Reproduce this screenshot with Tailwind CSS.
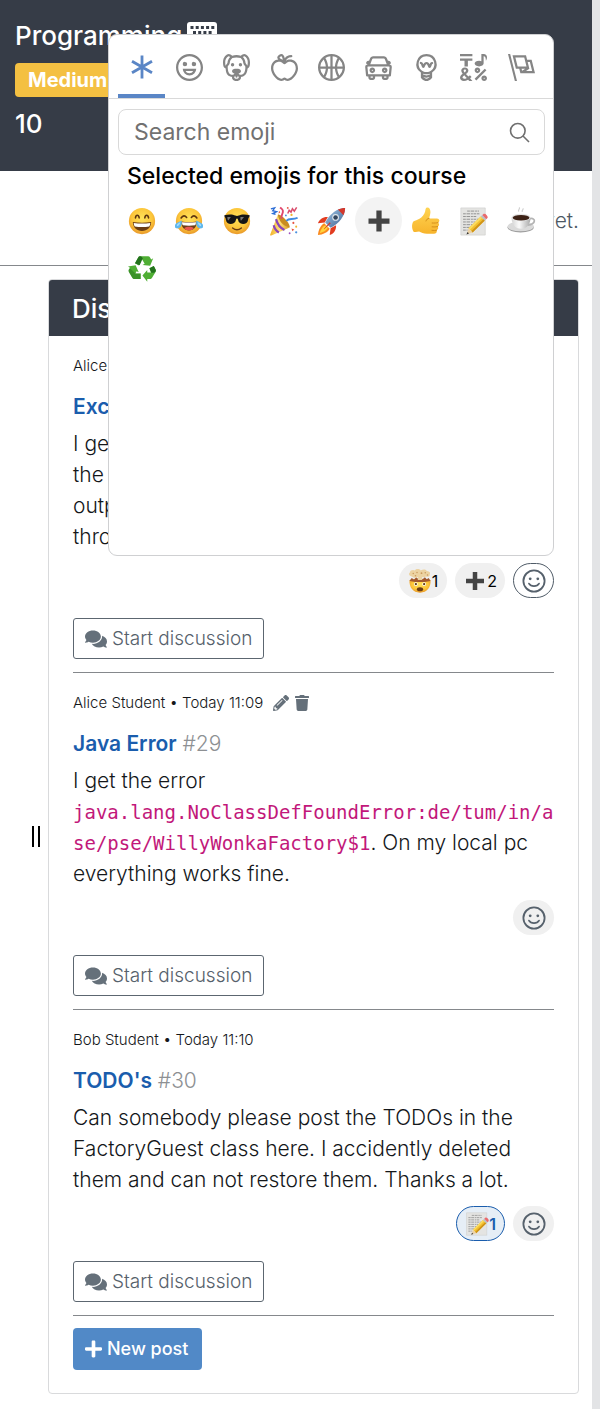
<!DOCTYPE html>
<html lang="en">
<head>
<meta charset="utf-8">
<meta name="viewport" content="width=device-width, initial-scale=1">
<title>Programming exercise discussion</title>
<script src="https://cdn.jsdelivr.net/npm/@tailwindcss/browser@4"></script>
</head>
<body class="bg-[#e3e4e6] font-['Inter',sans-serif] text-[#14171a]">

<svg class="absolute size-0" aria-hidden="true">
  <defs>
    <radialGradient id="face" cx=".5" cy=".4" r=".6"><stop offset="0" stop-color="#ffe25a"/><stop offset=".65" stop-color="#fcc63a"/><stop offset="1" stop-color="#e9992a"/></radialGradient>
    <linearGradient id="thumbFill" x1="0" y1="0" x2="0" y2="1"><stop offset="0" stop-color="#ffd452"/><stop offset="1" stop-color="#f7b42c"/></linearGradient>
    <linearGradient id="cone" x1="0" y1="0" x2="1" y2="0"><stop offset="0" stop-color="#f2b32c"/><stop offset=".5" stop-color="#ffe07a"/><stop offset="1" stop-color="#d99a20"/></linearGradient>
    <linearGradient id="hull" x1="0" y1="0" x2="1" y2="1"><stop offset="0" stop-color="#a9c9e6"/><stop offset=".5" stop-color="#6f95bd"/><stop offset="1" stop-color="#3c5f8c"/></linearGradient>
    <linearGradient id="cup" x1="0" y1="0" x2="1" y2="0"><stop offset="0" stop-color="#d4d4d4"/><stop offset=".4" stop-color="#fafafa"/><stop offset="1" stop-color="#a9a9a9"/></linearGradient>
  </defs>
  <symbol id="comments" viewBox="0 0 576 512"><path fill="currentColor" d="M416 192c0-88.4-93.1-160-208-160S0 103.6 0 192c0 34.3 14.1 65.9 38 92-13.4 30.2-35.5 54.2-35.8 54.5-2.2 2.3-2.8 5.7-1.5 8.7S4.8 352 8 352c36.6 0 66.9-12.3 88.7-25 32.2 15.7 70.3 25 111.3 25 114.9 0 208-71.6 208-160zm122 220c23.9-26 38-57.7 38-92 0-66.9-53.5-124.2-129.3-148.1.9 6.6 1.3 13.3 1.3 20.1 0 105.9-107.7 192-240 192-10.8 0-21.3-.8-31.7-1.9C207.8 439.6 281.8 480 368 480c41 0 79.1-9.2 111.3-25 21.8 12.7 52.1 25 88.7 25 3.2 0 6.1-1.9 7.3-4.8 1.3-2.9.7-6.3-1.5-8.7-.3-.3-22.4-24.2-35.8-54.5z"/></symbol>
  <symbol id="react" viewBox="0 0 24 24"><circle cx="12" cy="12" r="10.6" fill="none" stroke="currentColor" stroke-width="1.8"/><circle cx="8.2" cy="9.8" r="1.4" fill="currentColor"/><circle cx="15.8" cy="9.8" r="1.4" fill="currentColor"/><path d="M7 14.6c2 3.4 8 3.4 10 0" fill="none" stroke="currentColor" stroke-width="1.8" stroke-linecap="round"/></symbol>
  <symbol id="heavy-plus" viewBox="0 0 32 32"><path fill="#444" d="M13 4h6v9h9v6h-9v9h-6v-9H4v-6h9z"/></symbol>
  <symbol id="memo" viewBox="0 0 32 32">
    <path fill="#e4e4e2" stroke="#c9c9c7" stroke-width=".6" d="M2 1h27v30H2z"/>
    <g stroke="#8b8b8b" stroke-width="1" stroke-dasharray="3 .8 4 1 2 .7"><path d="M9 4.500h13M4.500 7.500h18M4.500 10.500h15M4.500 13.500h17M4.500 16.500h13M4.500 19.500h11M4.500 22.500h8M4.500 25.500h5"/></g>
    <path fill="#f3c02f" d="M10.500 23.500 24 10.500l4.500 4.500L15 28.200z"/><path fill="#fbdc62" d="m10.500 23.500 13.500-13 1.500 1.500-13.500 13z"/><path fill="#cf9319" d="m13.500 26.700 13.400-13.200 1.600 1.500L15 28.200z"/>
    <path fill="#ecd1a4" d="m10.500 23.500 4.500 4.700-6.300 1.900z"/><path fill="#333" d="m9.400 27.500 1.600 1.800-2.800 1z"/>
    <path fill="#b9c0c6" d="m24 10.500 1.700-1.600 4.400 4.600-1.600 1.500z"/><path fill="#ea6a6c" d="m25.700 8.900 1.300-1.200c1.700-1.500 5.800 2.700 4.400 4.500l-1.300 1.300z"/>
  </symbol>
  <symbol id="grin" viewBox="0 0 32 32"><circle cx="16" cy="16" r="15" fill="url(#face)"/><path d="M8.500 12.500c.6-4 3.600-4 4.300 0M19.200 12.500c.6-4 3.600-4 4.300 0" fill="none" stroke="#5d3510" stroke-width="1.800" stroke-linecap="round"/><path fill="#6b3d14" d="M5.500 17.200c7 .9 14 .9 21 0 0 6-4.500 10.300-10.500 10.300S5.500 23.200 5.500 17.200z"/><path fill="#fff" d="M6.500 18.200c6.500.8 12.500.8 19 0-.1 1.700-.5 2.900-1.200 4-5.500.8-11 .8-16.600 0-.7-1.100-1.100-2.300-1.200-4z"/></symbol>
  <symbol id="joy" viewBox="0 0 32 32"><circle cx="16" cy="16" r="15" fill="url(#face)"/><path d="M7 12.600c2-3.300 4.500-3 6.300-.6M18.700 12c1.800-2.400 4.300-2.700 6.300.6" fill="none" stroke="#5d3510" stroke-width="1.800" stroke-linecap="round"/><path fill="#6b3d14" d="M7 16.500c6 .8 12 .8 18 0 0 6-3.500 10.300-9 10.300s-9-4.300-9-10.300z"/><path fill="#fff" d="M8 17.300c5.300.7 10.700.7 16 0-.1 1.600-.4 2.500-.9 3.500-4.700.7-9.500.7-14.200 0-.5-1-.8-1.900-.9-3.500z"/><path fill="#e8584e" d="M10.500 24.200c2.700-2.200 8.300-2.200 11 0-2.600 3.300-8.400 3.300-11 0z"/><path fill="#5fb8ee" d="M7.500 15.500C8.500 20.500 6.500 24.500 2.500 24.500c-3.700 0-3.800-4.500-.3-6.200zM24.500 15.500c-1 5 1 9 5 9 3.700 0 3.800-4.500.3-6.200z"/><path fill="#a6ddfb" d="M6 17.500c-.5 2.500-1.700 4-3.700 4.500-.6-1.500.2-2.700 3.700-4.500zM26 17.500c.5 2.500 1.700 4 3.700 4.500.6-1.500-.2-2.700-3.700-4.500z"/></symbol>
  <symbol id="cool" viewBox="0 0 32 32"><circle cx="16" cy="16" r="15" fill="url(#face)"/><path fill="#151515" d="M1.500 9.500c5-1.500 10-1.200 12.500.3 1.300.6 2.700.6 4 0 2.500-1.500 7.500-1.800 12.500-.3l-.5 2.300c-.8.300-1 1-1.300 2.700-.6 3.500-2.600 4.800-5.700 4.800-4 0-5.300-2.400-5.900-5-.3-1.500-1.900-1.500-2.200 0-.6 2.600-1.900 5-5.900 5-3.100 0-5.100-1.300-5.700-4.800-.3-1.700-.5-2.400-1.300-2.700z"/><path fill="#777" d="M5 11.300h4l-3 4.200c-.8-1-1-2.800-1-4.200zM20 11.300h4l-3.500 4.500c-.6-1.200-.7-3-.5-4.500z"/><path d="M11 24c3 2.300 7 2.300 10 0" fill="none" stroke="#6b3d14" stroke-width="1.700" stroke-linecap="round"/></symbol>
  <symbol id="party" viewBox="0 0 32 32"><path fill="url(#cone)" d="M9.500 9c1.500 6 6.500 12 12.500 14L2.500 31.500c-1 .3-1.500-.2-1.200-1.200z"/><path d="M7.500 14c1.300 5 4.500 9.500 9 11.500M5 20.500c.8 3.500 2.500 6 5.500 7.700" fill="none" stroke="#8a45b8" stroke-width="2.300"/><path fill="#c98c20" d="M9.500 9c3-.8 13.500 9 12.500 14-6-.8-12.500-8-12.500-14z"/><path d="M13.500 13.500c-1-4 1.800-5 1.300-8.500-.3-1.800-1.800-2.500-3-3.500" fill="none" stroke="#e0476d" stroke-width="2"/><path d="M18.500 15.800c3-3.500 7-.5 12-3.300" fill="none" stroke="#3f8be0" stroke-width="2"/><path d="M2 3l4-1-2 3 4 1-4 2 3 1" fill="none" stroke="#2f6fd6" stroke-width="1.500"/><path d="m20 8 1.500-3.500 2 2L25 3l2 2.500 2.500-4" fill="none" stroke="#d94c6c" stroke-width="1.600"/><g fill="#e5533f"><circle cx="20" cy="2" r="1"/><circle cx="26" cy="18" r="1.100"/><path d="m24 24 3 1-2 2zM11 5l1 2-2 1z"/></g><g fill="#f1b52e"><circle cx="24" cy="9.500" r="1.200"/><circle cx="29" cy="22" r="1.100"/></g><g fill="#4c90df"><circle cx="29" cy="28" r="1.200"/><circle cx="18" cy="10" r="1"/></g><circle cx="22" cy="29" r="1" fill="#9c50be"/></symbol>
  <symbol id="rocket" viewBox="0 0 32 32"><path fill="#e23c20" d="M12 11C7 10.500 2.500 13.500 1 18l7.500-1zM21 20c.5 5-2.500 9.500-7 11l1-7.500z"/><path fill="#fa8a1f" d="M8 18c-4 2-6.500 7.500-7 13 5.500-.5 11-3 13-7z"/><path fill="#ffd43c" d="M9 20c-3 1.500-5 5-6 9 4-1 7.500-3 9-6z"/><path fill="url(#hull)" d="M31 1C22.500 1 14 7.500 9 17l6 6c9.500-5 16-13.500 16-22z"/><path fill="#d3382c" d="M31 1c-2.800 0-5.400.6-8 1.800L29.200 9C30.400 6.400 31 3.800 31 1zM14 16.700l1.300 1.300-7.500 6.500-.3-.3z"/><circle cx="20.500" cy="11.500" r="3.700" fill="#dfe6ec"/><circle cx="20.500" cy="11.500" r="2.500" fill="#33465e"/></symbol>
  <symbol id="thumb" viewBox="0 0 32 32"><path fill="url(#thumbFill)" d="M1.500 16.500C4 15.500 6 15 8.500 13.500c3-2 5.500-4.700 6.500-8.500.4-2 .5-4.500 2.500-4.500 2.800 0 3.800 3 3.500 6-.2 2.500-1 4.500-1.500 6.500h9c3.300 0 3.600 4 1.200 4.800 1.800 1.200 1.500 4-.4 4.600 1.300 1.300.7 3.700-1.200 4.200.8 2-.4 3.900-3 3.900h-8c-4 0-6.500-1.200-9-2.500-2 .7-4 .5-6 .5C-.5 25.500-.5 19.500 1.500 16.500z"/><path d="M29.700 17.800c-2 .6-4 .6-6.700.5M29.300 22.400c-2 .5-4 .5-6.300.3M28.100 26.600c-1.700.4-3.300.4-5.300.1M19.500 13c-2 .2-3 1.300-3.500 3" fill="none" stroke="#d38c17" stroke-width="1.100" stroke-linecap="round"/></symbol>
  <symbol id="coffee" viewBox="0 0 32 32"><ellipse cx="15" cy="22.500" rx="14.500" ry="5.500" fill="#9d9d9d"/><ellipse cx="15" cy="21.500" rx="14.500" ry="5.300" fill="#dadada"/><path d="M25 13c7-2 7.500 6-2 7" fill="none" stroke="#b4b4b4" stroke-width="1.900"/><path fill="url(#cup)" d="M5 11.500h21c0 7-4 12.500-10.500 12.500S5 18.500 5 11.500z"/><ellipse cx="15.500" cy="11.500" rx="10.500" ry="4" fill="#e6e6e6"/><ellipse cx="15.500" cy="11.800" rx="9.300" ry="3.100" fill="#3d2216"/><path d="M13 5c-1.500-2 2-2.500.5-4.500M17 5.500c-1.500-2 2-2.500.5-4" fill="none" stroke="#cfcfcf" stroke-width="1.300"/></symbol>
  <symbol id="recycle" viewBox="0 0 32 32"><g fill="#4fae34"><path d="M8 9.500 11.500 3c.6-1 1.400-1.500 2.500-1.500h9c1 0 1.700.4 2.200 1.300l1.300 2.200 2.300-1.200-3.500 8.500-8.700-1 2.400-1.400-3.300-5.700-3.500 7.800z"/><path d="m24.500 15 5-2.500 2 4c.6 1 .5 2 0 3L27.500 26c-.6 1-1.300 1.400-2.500 1.400h-3V30.500l-5.500-7 5.500-6.500v3h4.200z"/><path d="M14.500 21v6.500H7.300c-1.100 0-1.900-.4-2.400-1.400L1 19.300c-.5-1-.5-1.800 0-2.800l1.200-2L0 13l8.700-1.200 3.600 8-2.500-1.300L8.500 21z"/></g><g fill="#23721d"><path d="m8 9.500 3.500-6.500c1-1.800 3.500-2 4.700-.2l.6 1.100-3.500 7.700z"/><path d="m24.500 15 5-2.500 2 4c1 2-.5 3.700-2.300 3.700h-2.500z"/><path d="M1 19.300C0 17 1.500 16 2.500 15.500l6 5.500H14.500v6.500H7.300c-1 0-1.900-.4-2.400-1.400z" opacity=".45"/></g></symbol>
  <symbol id="mindblown" viewBox="0 0 32 32"><path fill="url(#face)" d="M2 15c4-2 24-2 28 0 .6 9-4.500 16.500-14 16.500S1.400 24 2 15z"/><path fill="#a2592d" d="M2 15.500 5 12l3 2 3-3 3 2.500L16.500 10l3 3.500 3-2.500 2.500 2.500 2.500-1.500 2.500 3.500c-4 2.500-24 2.500-28 0z"/><path fill="#ecd3a2" d="M5 10C1.500 9.500 0 6.500 2.500 4.500 3 1.500 7 .5 9 2c2-2.500 6-2.500 8 0 2.500-2 6.500-2 8 .5 3 0 5.500 2 4 4.500.5 2.500-2 4-5 3-2 1.500-4 1-5.500.5l.5 4h-6l.5-4c-3 1.500-6 1.500-8.500-.5z"/><g fill="#c99a5e"><circle cx="7" cy="6" r="1"/><circle cx="12" cy="4.500" r="1"/><circle cx="18" cy="5.500" r="1.200"/><circle cx="23" cy="5" r="1"/><circle cx="26" cy="8" r="1"/><circle cx="10" cy="9" r="1.100"/></g><circle cx="10.500" cy="20" r="2.500" fill="#fff"/><circle cx="21.500" cy="20" r="2.500" fill="#fff"/><circle cx="10.500" cy="20" r="1.500" fill="#5d3510"/><circle cx="21.500" cy="20" r="1.500" fill="#5d3510"/><ellipse cx="16" cy="27" rx="4.200" ry="2.700" fill="#6b3d14"/></symbol>
</svg>

<div class="relative mr-2 bg-white">
  <header class="bg-[#363c47] px-[15px] pt-4 pb-7 font-medium text-white">
    <h1 class="flex h-[38px] items-center gap-[5px] text-[26px]">Programming
      <svg class="mb-1 h-6 w-[30px]" viewBox="0 0 30 24" aria-hidden="true"><rect y="1" width="30" height="21" rx="3" fill="#fff"/><path stroke="#363c47" stroke-width="3" stroke-dasharray="3 2.200" d="M3.500 6.500h23.800M6 11.500h19M3.500 16.500h3M8.500 16.500h13M23.500 16.500h3" /></svg>
    </h1>
    <span class="mt-[9px] flex h-[34px] w-[120px] items-center rounded bg-[#f4c042] px-[13px] text-xl font-bold">Medium</span>
    <p class="mt-2 h-[38px] text-[26px] leading-[38px]">10</p>
  </header>

  <p class="flex h-[95px] items-center justify-end border-b border-[#85888c] px-[13px] pt-[6px] text-[21px] font-light text-[#4d5863]">No results yet.</p>

  <div class="flex items-stretch pr-[13px] pt-[13px] pb-4">
    <div class="flex w-12 shrink-0 items-center justify-end pr-2" role="separator" aria-orientation="vertical" aria-label="Resize discussion">
      <span class="flex h-[21px] w-2 justify-between"><i class="w-[2px] bg-black"></i><i class="w-[2px] bg-black"></i></span>
    </div>
    <main class="min-w-0 flex-1 rounded border border-[#d9dadc] bg-white">
      <h2 class="flex h-14 items-center rounded-t-[3px] bg-[#363c47] px-[23px] text-[26px] font-medium text-white">Discussion</h2>

      <div class="px-6 pb-[23px]">
        <article class="border-b border-[#85888c] pt-[18px] pb-[13px]">
          <p class="h-6 text-[15px] leading-6 font-light">Alice Student • Today 11:08</p>
          <h3 class="mt-[14px] text-[21px] leading-[30px] font-light text-[#8d9093]"><a href="#28" class="font-semibold text-[#1a5dad]">Exception</a> #28</h3>
          <p class="mt-[6px] text-[21px] leading-[31px] font-light">I get an exception when I run<br>the tests. The expected<br>output is not shown and it<br>throws an error.</p>
          <div class="mt-[11px] flex justify-end gap-2">
            <button class="flex h-[35px] items-center rounded-full bg-[#f0f0f0] px-[9px] text-base text-black" aria-label="Exploding head, 1 reaction"><svg class="size-6"><use href="#mindblown"/></svg>1</button>
            <button class="flex h-[35px] items-center rounded-full bg-[#f0f0f0] px-2 text-base text-black" aria-label="Plus, 2 reactions"><svg class="size-6"><use href="#heavy-plus"/></svg>2</button>
            <button class="flex h-[35px] w-[41px] items-center justify-center rounded-full border border-[#4f5b67] bg-white text-[#56616c]" aria-label="Add reaction"><svg class="size-6"><use href="#react"/></svg></button>
          </div>
          <button class="mt-5 flex h-[41px] items-center gap-[5px] rounded-[3px] border border-[#5c6670] px-[11px] pt-px text-[19px] font-light text-[#56616b]"><svg class="h-5 w-[22px] text-[#65707a]"><use href="#comments"/></svg>Start discussion</button>
        </article>

        <article class="border-b border-[#85888c] pt-[18px] pb-[13px]">
          <div class="flex h-6 items-center text-[15px] leading-6 font-light">
            <p>Alice Student • Today 11:09</p>
            <button class="ml-[10px] text-[#65707a]" aria-label="Edit post"><svg class="size-4" viewBox="0 0 512 512"><path fill="currentColor" d="M497.9 142.1l-46.1 46.1c-4.7 4.7-12.3 4.7-17 0l-111-111c-4.7-4.7-4.7-12.3 0-17l46.1-46.1c18.7-18.7 49.1-18.7 67.900 0l60.100 60.100c18.800 18.700 18.800 49.100 0 67.900zM284.200 99.800L21.600 362.400.400 483.900c-2.900 16.400 11.400 30.600 27.800 27.800l121.500-21.300 262.600-262.600c4.700-4.700 4.700-12.300 0-17l-111-111c-4.800-4.700-12.400-4.700-17.100 0zM124.100 339.900c-5.500-5.500-5.500-14.300 0-19.800l154-154c5.500-5.500 14.300-5.500 19.800 0s5.500 14.300 0 19.800l-154 154c-5.500 5.500-14.300 5.500-19.800 0zM88 424h48v36.300l-64.500 11.300-31.100-31.100L51.700 376H88v48z"/></svg></button>
            <button class="ml-[6px] text-[#65707a]" aria-label="Delete post"><svg class="h-4 w-[14px]" viewBox="0 0 448 512"><path fill="currentColor" d="M432 32H312l-9.400-18.700A24 24 0 0 0 281.100 0H166.800a23.720 23.720 0 0 0-21.400 13.300L136 32H16A16 16 0 0 0 0 48v32a16 16 0 0 0 16 16h416a16 16 0 0 0 16-16V48a16 16 0 0 0-16-16zM53.200 467a48 48 0 0 0 47.900 45h245.800a48 48 0 0 0 47.900-45L416 128H32z"/></svg></button>
          </div>
          <h3 class="mt-[14px] text-[21px] leading-[30px] font-light text-[#8d9093]"><a href="#29" class="font-semibold text-[#1a5dad]">Java Error</a> #29</h3>
          <p class="mt-[6px] text-[21px] leading-[31px] font-light">I get the error<br><code class="font-['DejaVu_Sans_Mono',monospace] text-[19px] leading-none font-normal break-all text-[#c2187a]">java.lang.NoClassDefFoundError:de/tum/in/ase/pse/WillyWonkaFactory$1</code>. On my local pc everything works fine.</p>
          <div class="mt-[11px] flex justify-end">
            <button class="flex h-[35px] w-[41px] items-center justify-center rounded-full bg-[#f0f0f0] text-[#56616c]" aria-label="Add reaction"><svg class="size-6"><use href="#react"/></svg></button>
          </div>
          <button class="mt-5 flex h-[41px] items-center gap-[5px] rounded-[3px] border border-[#5c6670] px-[11px] pt-px text-[19px] font-light text-[#56616b]"><svg class="h-5 w-[22px] text-[#65707a]"><use href="#comments"/></svg>Start discussion</button>
        </article>

        <article class="border-b border-[#85888c] pt-[18px] pb-[13px]">
          <p class="h-6 text-[15px] leading-6 font-light">Bob Student • Today 11:10</p>
          <h3 class="mt-[14px] text-[21px] leading-[30px] font-light text-[#8d9093]"><a href="#30" class="font-semibold text-[#1a5dad]">TODO's</a> #30</h3>
          <p class="mt-[6px] text-[21px] leading-[31px] font-light">Can somebody please post the TODOs in the FactoryGuest class here. I accidently deleted them and can not restore them. Thanks a lot.</p>
          <div class="mt-[11px] flex justify-end gap-2">
            <button class="flex h-[35px] items-center rounded-full border border-[#1a5dad] bg-[#e6eef6] px-2 text-base font-semibold text-[#1a5dad]" aria-label="Memo, 1 reaction"><svg class="size-6"><use href="#memo"/></svg>1</button>
            <button class="flex h-[35px] w-[41px] items-center justify-center rounded-full bg-[#f0f0f0] text-[#56616c]" aria-label="Add reaction"><svg class="size-6"><use href="#react"/></svg></button>
          </div>
          <button class="mt-5 flex h-[41px] items-center gap-[5px] rounded-[3px] border border-[#5c6670] px-[11px] pt-px text-[19px] font-light text-[#56616b]"><svg class="h-5 w-[22px] text-[#65707a]"><use href="#comments"/></svg>Start discussion</button>
        </article>

        <button class="mt-3 flex h-[42px] items-center gap-[5px] rounded-sm bg-[#5189c7] pr-[14px] pl-3 text-lg font-medium text-white"><svg class="h-5 w-[17px]" viewBox="0 0 448 512"><path fill="currentColor" d="M416 208H272V64c0-17.670-14.330-32-32-32h-32c-17.670 0-32 14.330-32 32v144H32c-17.670 0-32 14.330-32 32v32c0 17.670 14.330 32 32 32h144v144c0 17.670 14.330 32 32 32h32c17.670 0 32-14.330 32-32V304h144c17.670 0 32-14.330 32-32v-32c0-17.670-14.330-32-32-32z"/></svg>New post</button>
      </div>
    </main>
  </div>

  <section class="absolute top-[34px] right-[38px] left-[108px] h-[522px] rounded-[9px] border border-[#cfd0d2] bg-white" aria-label="Emoji picker">
    <nav class="grid h-16 grid-cols-9 border-b border-[#d9d9d9] pt-px pr-2 pl-[9px] text-[#858585]">
      <button class="flex items-center justify-center border-b-4 border-[#5a86c6] pt-1 text-[#5a86c6]" aria-label="Custom"><svg class="size-[26px]" viewBox="0 0 26 26"><path d="M13 1.500v23M3 7.200l20 11.600M3 18.800 23 7.200" stroke="currentColor" stroke-width="2.800"/></svg></button>
      <button class="flex items-center justify-center" aria-label="Smileys"><svg class="size-[27px]" viewBox="0 0 24 24" fill="currentColor"><path d="M12 0C5.373 0 0 5.373 0 12s5.373 12 12 12 12-5.373 12-12S18.627 0 12 0m0 22C6.486 22 2 17.514 2 12S6.486 2 12 2s10 4.486 10 10-4.486 10-10 10M8 7a2 2 0 1 0-.001 3.999A2 2 0 0 0 8 7M16 7a2 2 0 1 0-.001 3.999A2 2 0 0 0 16 7M15.232 15c-.693 1.195-1.870 2-3.349 2-1.477 0-2.655-.805-3.347-2H15m3-2H6a6 6 0 1 0 12 0"/></svg></button>
      <button class="flex items-center justify-center" aria-label="Animals and nature"><svg class="size-[27px]" viewBox="0 0 24 24" fill="currentColor"><path d="M15.500 8a1.500 1.500 0 1 0 .001 3.001A1.500 1.500 0 0 0 15.500 8M8.500 8a1.500 1.500 0 1 0 .001 3.001A1.500 1.500 0 0 0 8.500 8"/><path d="M18.933 0h-.027c-.97 0-2.138.787-3.018 1.497-1.274-.374-2.612-.51-3.887-.51-1.285 0-2.616.133-3.874.517C7.245.79 6.069 0 5.093 0h-.027C3.352 0 .07 2.67.002 7.026c-.039 2.479.276 4.238 1.040 5.013.254.258.882.677 1.295.882.191 3.177.922 5.238 2.536 6.380.897.637 2.187.949 3.200 1.102C8.040 20.600 8 20.795 8 21c0 1.773 2.350 3 4 3 1.648 0 4-1.227 4-3 0-.201-.038-.393-.072-.586 2.573-.385 5.435-1.877 5.925-7.587.396-.22.887-.568 1.104-.788.763-.774 1.079-2.534 1.040-5.013C23.929 2.670 20.646 0 18.933 0M3.223 9.135c-.237.281-.837 1.155-.884 1.238-.15-.41-.368-1.349-.337-3.291.051-3.281 2.478-4.972 3.091-5.031.256.015.731.27 1.265.646-1.110 1.171-2.275 2.915-2.352 5.125-.133.546-.398.858-.783 1.313M12 22c-.901 0-1.954-.693-2-1 0-.654.475-1.236 1-1.602V20a1 1 0 1 0 2 0v-.602c.524.365 1 .947 1 1.602-.046.307-1.099 1-2 1m3-3.480v.020a4.752 4.752 0 0 0-1.262-1.020c1.092-.516 2.239-1.334 2.239-2.217 0-1.842-1.781-2.195-3.977-2.195-2.196 0-3.978.354-3.978 2.195 0 .883 1.148 1.701 2.238 2.217A4.800 4.800 0 0 0 9 18.539v-.025c-1-.076-2.182-.281-2.973-.842-1.301-.92-1.838-3.045-1.853-6.478l.023-.041c.496-.826 1.490-1.450 1.804-3.102 0-2.047 1.357-3.631 2.362-4.522C9.370 3.178 10.555 3 11.948 3c1.447 0 2.685.192 3.733.57 1 .9 2.316 2.465 2.316 4.480.313 1.651 1.307 2.275 1.803 3.102.035.058.068.117.102.178-.059 5.967-1.949 7.010-4.902 7.190m6.628-8.202c-.037-.065-.074-.13-.113-.195a7.587 7.587 0 0 0-.739-.987c-.385-.455-.648-.768-.782-1.313-.076-2.209-1.241-3.954-2.353-5.124.531-.376 1.004-.63 1.261-.647.636.071 3.044 1.764 3.096 5.031.027 1.810-.347 3.218-.37 3.235"/></svg></button>
      <button class="flex items-center justify-center" aria-label="Food"><svg class="size-[27px]" viewBox="0 0 24 24" fill="currentColor"><path d="M17 4.978c-1.838 0-2.876.396-3.680.934.513-1.172 1.768-2.934 4.680-2.934a1 1 0 0 0 0-2c-2.921 0-4.629 1.365-5.547 2.512-.064.078-.119.162-.18.244C11.730 1.838 10.798.023 9.207.023 8.579.022 7.850.306 7 .978 5.027 2.540 5.329 3.902 6.492 4.999 3.609 5.222 0 7.352 0 12.969c0 4.582 4.961 11.009 9 11.009 1.975 0 2.371-.486 3-1 .629.514 1.025 1 3 1 4.039 0 9-6.418 9-11 0-5.953-4.055-8-7-8M8.242 2.546c.641-.508.943-.523.965-.523.426.169.975 1.405 1.357 3.055-1.527-.629-2.741-1.352-2.980-1.846.059-.112.241-.356.658-.686M15 21.978c-1.080 0-1.210-.109-1.559-.402l-.176-.146c-.367-.302-.816-.452-1.266-.452s-.898.15-1.266.452l-.176.146c-.347.292-.477.402-1.557.402-2.813 0-7-5.389-7-9.009 0-5.823 4.488-5.991 5-5.991 1.939 0 2.484.471 3.387 1.251l.323.276a1.995 1.995 0 0 0 2.580 0l.323-.276c.902-.78 1.447-1.251 3.387-1.251.512 0 5 .168 5 6 0 3.617-4.187 9-7 9"/></svg></button>
      <button class="flex items-center justify-center" aria-label="Activity"><svg class="size-[27px]" viewBox="0 0 24 24" fill="currentColor"><path d="M12 0C5.373 0 0 5.372 0 12c0 6.627 5.373 12 12 12 6.628 0 12-5.373 12-12 0-6.628-5.372-12-12-12m9.949 11H17.050c.224-2.527 1.232-4.773 1.968-6.113A9.966 9.966 0 0 1 21.949 11M13 11V2.051a9.945 9.945 0 0 1 4.432 1.564c-.858 1.491-2.156 4.220-2.392 7.385H13zm-2 0H8.961c-.238-3.165-1.536-5.894-2.393-7.385A9.950 9.950 0 0 1 11 2.051V11zm0 2v8.949a9.937 9.937 0 0 1-4.432-1.564c.857-1.492 2.155-4.221 2.393-7.385H11zm4.040 0c.236 3.164 1.534 5.893 2.392 7.385A9.920 9.920 0 0 1 13 21.949V13h2.040zM4.982 4.887C5.718 6.227 6.726 8.473 6.951 11h-4.900a9.977 9.977 0 0 1 2.931-6.113M2.051 13h4.900c-.226 2.527-1.233 4.771-1.969 6.113A9.972 9.972 0 0 1 2.051 13m16.967 6.113c-.735-1.342-1.744-3.586-1.968-6.113h4.899a9.961 9.961 0 0 1-2.931 6.113"/></svg></button>
      <button class="flex items-center justify-center" aria-label="Travel and places"><svg class="size-[27px]" viewBox="0 0 24 24" fill="currentColor"><path d="M6.500 12C5.122 12 4 13.121 4 14.500S5.122 17 6.500 17 9 15.879 9 14.500 7.878 12 6.500 12m0 3c-.275 0-.5-.225-.5-.5s.225-.5.5-.5.5.225.5.5-.225.5-.5.5M17.500 12c-1.378 0-2.500 1.121-2.500 2.500s1.122 2.500 2.500 2.500 2.500-1.121 2.500-2.500-1.122-2.500-2.500-2.500m0 3c-.275 0-.5-.225-.5-.5s.225-.5.5-.5.5.225.5.5-.225.5-.5.5"/><path d="M22.482 9.494l-1.039-.346L21.400 9h.6c.552 0 1-.439 1-.992 0-.006-.003-.008-.003-.008H23c0-1-.889-2-1.984-2h-.642l-.731-1.717C19.262 3.012 18.091 2 16.764 2H7.236C5.909 2 4.738 3.012 4.357 4.283L3.626 6h-.642C1.889 6 1 7 1 8h.003S1 8.002 1 8.008C1 8.561 1.448 9 2 9h.6l-.043.148-1.039.346a2.001 2.001 0 0 0-1.359 2.097l.751 7.508a1 1 0 0 0 .994.901H3v1c0 1.103.896 2 2 2h2c1.104 0 2-.897 2-2v-1h6v1c0 1.103.896 2 2 2h2c1.104 0 2-.897 2-2v-1h1.096a.999.999 0 0 0 .994-.901l.751-7.508a2.001 2.001 0 0 0-1.359-2.097M6.273 4.857C6.402 4.430 6.788 4 7.236 4h9.527c.448 0 .834.43.963.857L19.313 9H4.688l1.585-4.143zM7 21H5v-1h2v1zm12 0h-2v-1h2v1zm2.189-3H2.811l-.662-6.607L3 11h18l.852.393L21.189 18z"/></svg></button>
      <button class="flex items-center justify-center" aria-label="Objects"><svg class="size-[27px]" viewBox="0 0 24 24" fill="currentColor"><path d="M12 0a9 9 0 0 0-5 16.482V21s2.035 3 5 3 5-3 5-3v-4.518A9 9 0 0 0 12 0zm0 2c3.860 0 7 3.141 7 7s-3.140 7-7 7-7-3.141-7-7 3.140-7 7-7zM9 17.477c.94.332 1.946.523 3 .523s2.060-.19 3-.523v.834c-.91.436-1.925.689-3 .689a6.924 6.924 0 0 1-3-.69v-.833zm.236 3.070A8.854 8.854 0 0 0 12 21c.965 0 1.888-.167 2.758-.451C14.155 21.173 13.153 22 12 22c-1.102 0-2.117-.789-2.764-1.453z"/><path d="M14.745 12.449h-.004c-.852-.024-1.188-.858-1.577-1.824-.421-1.061-.703-1.561-1.182-1.566h-.009c-.481 0-.783.497-1.235 1.537-.436.982-.801 1.811-1.636 1.791l-.276-.043c-.565-.171-.853-.691-1.284-1.794-.125-.313-.202-.632-.27-.913-.051-.213-.127-.53-.195-.634C7.067 9.004 7.039 9 6.990 9A1 1 0 0 1 7 7h.010c1.662.017 2.015 1.373 2.198 2.134.486-.981 1.304-2.058 2.797-2.075 1.531.018 2.280 1.153 2.731 2.141l.002-.008C14.944 8.424 15.327 7 16.979 7h.032A1 1 0 1 1 17 9h-.011c-.149.076-.256.474-.319.709a6.484 6.484 0 0 1-.311.951c-.429.973-.79 1.789-1.614 1.789"/></svg></button>
      <button class="flex items-center justify-center" aria-label="Symbols"><svg class="size-[27px]" viewBox="0 0 24 24" fill="currentColor"><path d="M0 0h11v2H0zM4 11h3V6h4V4H0v2h4zM15.500 17c1.381 0 2.500-1.116 2.500-2.493s-1.119-2.493-2.500-2.493S13 13.130 13 14.507 14.119 17 15.500 17m0-2.986c.276 0 .5.222.5.493 0 .272-.224.493-.5.493s-.5-.221-.5-.493.224-.493.5-.493M21.500 19.014c-1.381 0-2.500 1.116-2.500 2.493S20.119 24 21.500 24s2.500-1.116 2.500-2.493-1.119-2.493-2.500-2.493m0 2.986a.497.497 0 0 1-.5-.493c0-.271.224-.493.5-.493s.5.222.5.493a.497.497 0 0 1-.5.493M22 13l-9 9 1.513 1.500 8.990-9.009zM17 11c2.209 0 4-1.119 4-2.500V2s.985-.161 1.498.949C23.010 4.055 23 6 23 6s1-1.119 1-3.135C24-.02 21 0 21 0h-2v6.347A5.853 5.853 0 0 0 17 6c-2.209 0-4 1.119-4 2.500s1.791 2.500 4 2.500M10.297 20.482l-1.475-1.585a47.540 47.540 0 0 1-1.442 1.129c-.307-.288-.989-1.016-2.045-2.183.902-.836 1.479-1.466 1.729-1.892s.376-.871.376-1.336c0-.592-.273-1.178-.818-1.759-.546-.581-1.329-.871-2.349-.871-1.008 0-1.790.293-2.344.879-.556.587-.832 1.181-.832 1.784 0 .813.419 1.748 1.256 2.805-.847.614-1.444 1.208-1.794 1.784a3.465 3.465 0 0 0-.523 1.833c0 .857.308 1.560.924 2.107.616.549 1.423.823 2.420.823 1.173 0 2.444-.379 3.813-1.137L8.235 24h2.819l-2.090-2.383 1.333-1.135zm-6.736-6.389a1.020 1.020 0 0 1 .73-.286c.31 0 .559.085.747.254a.849.849 0 0 1 .283.659c0 .518-.419 1.112-1.257 1.784-.536-.651-.805-1.231-.805-1.742a.901.901 0 0 1 .302-.669M3.740 22c-.427 0-.778-.116-1.057-.349-.279-.232-.418-.487-.418-.766 0-.594.509-1.288 1.527-2.083.968 1.134 1.717 1.946 2.248 2.438-.921.507-1.686.76-2.300.76"/></svg></button>
      <button class="flex items-center justify-center" aria-label="Flags"><svg class="size-[27px]" viewBox="0 0 24 24" fill="currentColor"><path d="M0 0l6.084 24H8L1.916 0zM21 5h-4l-1-4H4l3 12h3l1 4h13L21 5zM6.563 3h7.875l2 8H8.563l-2-8zm8.832 10l-2.856 1.904L12.063 13h3.332zM19 13l-1.500-6h1.938l2 8H16l3-2z"/></svg></button>
    </nav>
    <div class="mt-[10px] mr-2 ml-[9px] flex h-[46px] items-center rounded-[8px] border border-[#d9d9d9] pr-[14px] pl-[15px]">
      <input type="search" aria-label="Search emoji" placeholder="Search emoji" class="min-w-0 flex-1 bg-transparent text-[23px] outline-none placeholder:text-[#717171]">
      <svg class="size-[21px]" viewBox="0 0 21 21" fill="none" stroke="#6f6f6f" stroke-width="1.600" aria-hidden="true"><circle cx="8.800" cy="8.800" r="7.300"/><path d="m14 14 6 6"/></svg>
    </div>
    <h2 class="mt-[6px] px-[18px] text-[23px] leading-[30px] font-medium text-black">Selected emojis for this course</h2>
    <div class="mt-[6px] grid auto-rows-[48px] grid-cols-9 pr-2 pl-[9px]">
      <button class="flex items-center justify-center" aria-label="Grinning face"><svg class="size-7"><use href="#grin"/></svg></button>
      <button class="flex items-center justify-center" aria-label="Tears of joy"><svg class="size-7"><use href="#joy"/></svg></button>
      <button class="flex items-center justify-center" aria-label="Sunglasses"><svg class="size-7"><use href="#cool"/></svg></button>
      <button class="flex items-center justify-center" aria-label="Party popper"><svg class="size-[30px]"><use href="#party"/></svg></button>
      <button class="flex items-center justify-center" aria-label="Rocket"><svg class="size-[29px]"><use href="#rocket"/></svg></button>
      <button class="flex size-[47px] items-center justify-center rounded-full bg-[#f3f3f3]" aria-label="Plus"><svg class="size-7"><use href="#heavy-plus"/></svg></button>
      <button class="flex items-center justify-center" aria-label="Thumbs up"><svg class="size-7"><use href="#thumb"/></svg></button>
      <button class="flex items-center justify-center" aria-label="Memo"><svg class="size-[29px]"><use href="#memo"/></svg></button>
      <button class="flex items-center justify-center" aria-label="Coffee"><svg class="size-[29px]"><use href="#coffee"/></svg></button>
      <button class="flex items-center justify-center" aria-label="Recycle"><svg class="size-7"><use href="#recycle"/></svg></button>
    </div>
  </section>
</div>
</body>
</html>
